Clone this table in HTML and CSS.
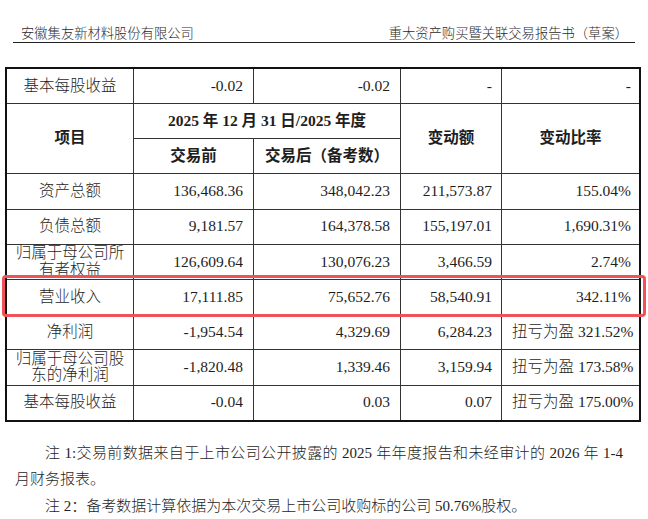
FILE: index.html
```html
<!DOCTYPE html>
<html lang="zh-CN">
<head>
<meta charset="utf-8">
<title>重大资产购买暨关联交易报告书（草案）</title>
<link rel="stylesheet" href="styles.css">
</head>
<body>
<header class="doc-header">
  <span>安徽集友新材料股份有限公司</span>
  <span>重大资产购买暨关联交易报告书（草案）</span>
</header>

<div class="table-wrap">
  <table class="fin">
    <colgroup>
      <col class="w0"><col class="w1"><col class="w2"><col class="w3"><col class="w4">
    </colgroup>
    <tr class="first">
      <td class="label">基本每股收益</td>
      <td class="num">-0.02</td>
      <td class="num">-0.02</td>
      <td class="num n3">-</td>
      <td class="num n4">-</td>
    </tr>
    <tr class="head">
      <td class="label bold" rowspan="2">项目</td>
      <td class="bold ctr" colspan="2">2025 年 12 月 31 日/2025 年度</td>
      <td class="bold ctr" rowspan="2">变动额</td>
      <td class="bold ctr" rowspan="2">变动比率</td>
    </tr>
    <tr class="head sub">
      <td class="bold ctr">交易前</td>
      <td class="bold ctr">交易后（备考数）</td>
    </tr>
    <tr>
      <td class="label">资产总额</td>
      <td class="num">136,468.36</td>
      <td class="num">348,042.23</td>
      <td class="num n3">211,573.87</td>
      <td class="num n4">155.04%</td>
    </tr>
    <tr>
      <td class="label">负债总额</td>
      <td class="num">9,181.57</td>
      <td class="num">164,378.58</td>
      <td class="num n3">155,197.01</td>
      <td class="num n4">1,690.31%</td>
    </tr>
    <tr>
      <td class="label two">归属于母公司所<br>有者权益</td>
      <td class="num">126,609.64</td>
      <td class="num">130,076.23</td>
      <td class="num n3">3,466.59</td>
      <td class="num n4">2.74%</td>
    </tr>
    <tr>
      <td class="label">营业收入</td>
      <td class="num">17,111.85</td>
      <td class="num">75,652.76</td>
      <td class="num n3">58,540.91</td>
      <td class="num n4">342.11%</td>
    </tr>
    <tr>
      <td class="label">净利润</td>
      <td class="num">-1,954.54</td>
      <td class="num">4,329.69</td>
      <td class="num n3">6,284.23</td>
      <td class="num n4">扭亏为盈 321.52%</td>
    </tr>
    <tr>
      <td class="label two">归属于母公司股<br>东的净利润</td>
      <td class="num">-1,820.48</td>
      <td class="num">1,339.46</td>
      <td class="num n3">3,159.94</td>
      <td class="num n4">扭亏为盈 173.58%</td>
    </tr>
    <tr>
      <td class="label">基本每股收益</td>
      <td class="num">-0.04</td>
      <td class="num">0.03</td>
      <td class="num n3">0.07</td>
      <td class="num n4">扭亏为盈 175.00%</td>
    </tr>
  </table>
  <div class="highlight"></div>
</div>

<section class="notes">
  <p class="note"><span class="line full">注 1:交易前数据来自于上市公司公开披露的 2025 年年度报告和未经审计的 2026 年 1-4</span><span class="line">月财务报表。</span></p>
  <p class="note"><span class="line">注 2：备考数据计算依据为本次交易上市公司收购标的公司 50.76%股权。</span></p>
</section>
</body>
</html>
```

FILE: styles.css
```css
html, body {
  margin: 0;
  padding: 0;
  background: #ffffff;
}

body {
  width: 648px;
  color: #1e1e1e;
  font-family: "Liberation Serif", "Noto Sans CJK SC", serif;
  font-weight: 300;
}

.doc-header {
  margin: 0 13px;
  padding: 26px 7px 0 8px;
  height: 16px;
  line-height: 16px;
  font-size: 13.3px;
  color: #2a2a2a;
  display: flex;
  justify-content: space-between;
  border-bottom: 1px solid #222;
}

.table-wrap {
  position: relative;
  margin-top: 24px;
}

.fin {
  margin-left: 5px;
  width: 636px;
  table-layout: fixed;
  border-collapse: separate;
  border-spacing: 0;
  border: 2px solid #111;
  font-size: 15.5px;
}

.w0 { width: 126px; }
.w1 { width: 120px; }
.w2 { width: 147px; }
.w3 { width: 101px; }
.w4 { width: 138px; }

.fin td {
  box-sizing: border-box;
  height: 35.2px;
  padding: 0 10px;
  border-left: 1px solid #333;
  border-top: 1px solid #333;
  vertical-align: middle;
  line-height: 16.5px;
  white-space: nowrap;
}

.fin tr > td:first-child { border-left: 0; }
.fin tr.sub > td:first-child { border-left: 1px solid #333; }
.fin tr.first td { border-top: 0; height: 34px; }

.label {
  text-align: center;
  padding: 0 6px !important;
}

.num { text-align: right; }
.fin td.n3 { padding-right: 9px; }
.fin td.n4 { padding-right: 8px; }

.ctr { text-align: center; }
.bold { font-weight: 700; }
.fin td.bold { padding: 0 4px; }

.highlight {
  position: absolute;
  left: 2px;
  top: 208px;
  width: 644px;
  height: 42px;
  box-sizing: border-box;
  border: 3.5px solid #f0525a;
  border-radius: 4px;
  pointer-events: none;
}

.notes {
  margin: 18px 0 0 15px;
  width: 608px;
  font-size: 15px;
  line-height: 26.5px;
}

.note {
  margin: 0;
}

.line { display: block; }
.note .line:first-child { text-indent: 30px; }
.full {
  text-align: justify;
  text-align-last: justify;
}
```
